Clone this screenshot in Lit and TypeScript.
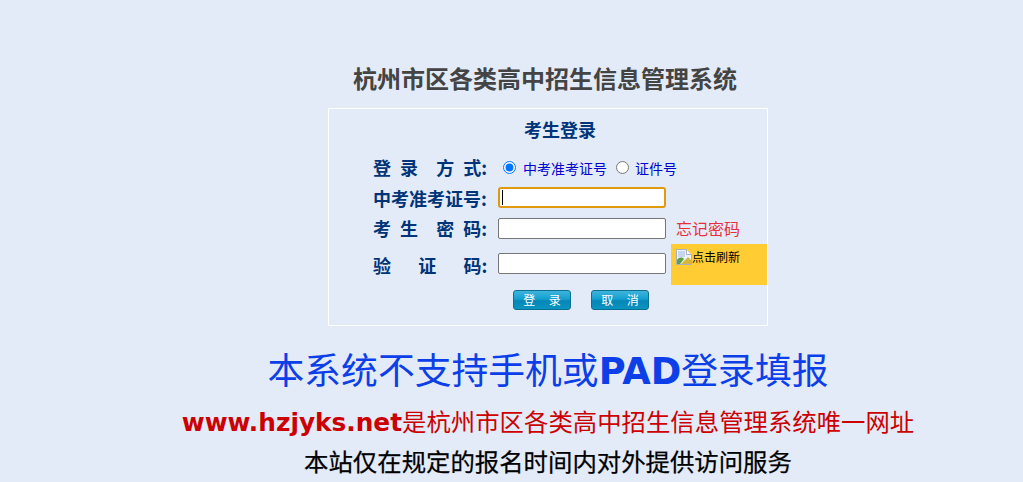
import { LitElement, html, css, unsafeCSS } from "lit";
import { customElement } from "lit/decorators.js";

const CJK = unsafeCSS(`"Noto Sans CJK SC", sans-serif`);
const SERIF = unsafeCSS(`"Liberation Serif", "Noto Sans CJK SC", serif`);

@customElement("app-root")
export class AppRoot extends LitElement {
  static styles = css`
    :host {
      display: block;
      height: 482px;
      overflow: hidden;
      background: #e3ebf8;
      font-family: ${CJK};
    }
    .page {
      display: flex;
      flex-direction: column;
      align-items: center;
      padding: 60px 0 0 73px;
    }
    .title {
      margin: 0 6px 0 0;
      font-size: 24px;
      line-height: 35px;
      font-weight: 700;
      color: #444;
    }
    .box {
      box-sizing: border-box;
      width: 440px;
      height: 218px;
      margin-top: 13px;
      border: 1px solid #fff;
      padding: 7px 0 0 44px;
    }
    .head {
      margin: 0 0 0 -20px;
      text-align: center;
      font-size: 18px;
      line-height: 26px;
      font-weight: 700;
      color: #003478;
    }
    .form {
      display: grid;
      grid-template-columns: 125px auto;
      margin-top: 10px;
    }
    .row {
      display: contents;
    }
    .label {
      font-size: 18px;
      line-height: 1;
      font-weight: 700;
      color: #003478;
      white-space: pre;
      word-spacing: 5px;
      align-self: center;
    }
    .label4 { margin-top: 2px; }
    .cell {
      display: flex;
      align-items: center;
    }
    .r1 { height: 30px; }
    .r2 { height: 31px; }
    .r3 { height: 30px; }
    .r4 { height: 41px; }
    .radio {
      margin: 0 7px 0 5px;
      width: 13px;
      height: 13px;
      accent-color: #0075ff;
    }
    .radio2 { margin: 0 6px 0 9px; }
    .opt {
      font-size: 14px;
      color: #0000cc;
      transform: translateY(1px);
    }
    .input {
      box-sizing: border-box;
      width: 168px;
      height: 21px;
      padding: 0;
      margin: 0;
      background: #fff;
      border: 1px solid #767676;
      border-radius: 2px;
    }
    .focus {
      display: flex;
      align-items: center;
      border: 2px solid #e09a10;
      border-radius: 3px;
      padding-left: 2px;
    }
    .caret {
      width: 1px;
      height: 15px;
      background: #000;
    }
    .forgot {
      margin-left: 10px;
      font-size: 16px;
      color: #e8303c;
    }
    .captcha {
      box-sizing: border-box;
      width: 96px;
      height: 41px;
      margin: 2px 0 0 5px;
      background: #ffcc33;
      padding: 5px 0 0 5px;
      display: flex;
      align-items: flex-start;
      font-size: 12px;
      line-height: 16px;
      color: #000;
    }
    .captcha svg { flex: none; }
    .btns {
      display: flex;
      gap: 20px;
      margin: 6px 0 0 140px;
    }
    .btn {
      box-sizing: border-box;
      width: 58px;
      height: 20px;
      padding: 0;
      border: 1px solid #0b6f92;
      border-radius: 3px;
      background: linear-gradient(#3fb4dc 0%, #12a0d0 45%, #0686b6 55%, #0a94c2 100%);
      color: #fff;
      font-family: inherit;
      font-size: 12px;
      line-height: 18px;
      white-space: pre;
    }
    .big {
      margin: 20px 0 0;
      font-size: 36.8px;
      line-height: 52px;
      font-weight: 400;
      color: #0d3fe8;
      font-family: ${SERIF};
      white-space: nowrap;
    }
    .big b, .url b {
      font-family: "DejaVu Sans", sans-serif;
      font-weight: 700;
    }
    .url b { font-size: 24.8px; }
    .url {
      margin: 7px 0 0;
      font-size: 24.4px;
      line-height: 35px;
      color: #cc0000;
      font-family: ${SERIF};
      white-space: nowrap;
    }
    .note {
      margin: 5px 0 0;
      font-size: 24.4px;
      line-height: 35px;
      font-weight: 400;
      color: #000;
      -webkit-text-stroke: 0.25px #000;
      font-family: ${SERIF};
      white-space: nowrap;
    }
  `;

  render() {
    return html`
      <div class="page">
        <h1 class="title">杭州市区各类高中招生信息管理系统</h1>
        <div class="box">
          <div class="head">考生登录</div>
          <div class="form">
            <div class="row">
              <div class="label">登 录  方 式:</div>
              <div class="cell r1">
                <input class="radio" type="radio" name="m" checked />
                <span class="opt">中考准考证号</span>
                <input class="radio radio2" type="radio" name="m" />
                <span class="opt">证件号</span>
              </div>
            </div>
            <div class="row">
              <div class="label">中考准考证号:</div>
              <div class="cell r2"><div class="input focus"><div class="caret"></div></div></div>
            </div>
            <div class="row">
              <div class="label">考 生  密 码:</div>
              <div class="cell r3"><input class="input" type="text" /><span class="forgot">忘记密码</span></div>
            </div>
            <div class="row">
              <div class="label label4">验   证   码:</div>
              <div class="cell r4">
                <input class="input" type="text" />
                <div class="captcha">
                  <svg width="16" height="16" viewBox="0 0 16 16">
                    <path d="M0.5 0.5H10.5L15.5 5.5V15.5H0.5Z" fill="#eef2f8" stroke="#a9b0bb" />
                    <path d="M10.5 0.5V5.5H15.5" fill="#fff" stroke="#a9b0bb" />
                    <path d="M2 2H9V8H2Z" fill="#c5d6ee" />
                    <path d="M1 15V11C3 8 6 8 8 10L4 15Z" fill="#5d9e48" />
                    <path d="M5 15L12 8L15 11V15Z" fill="#d6b63c" />
                  </svg>
                  <span>点击刷新</span>
                </div>
              </div>
            </div>
          </div>
          <div class="btns">
            <button class="btn">登     录</button>
            <button class="btn">取     消</button>
          </div>
        </div>
        <h2 class="big">本系统不支持手机或<b>PAD</b>登录填报</h2>
        <div class="url"><b>www.hzjyks.net</b>是杭州市区各类高中招生信息管理系统唯一网址</div>
        <div class="note">本站仅在规定的报名时间内对外提供访问服务</div>
      </div>
    `;
  }
}
